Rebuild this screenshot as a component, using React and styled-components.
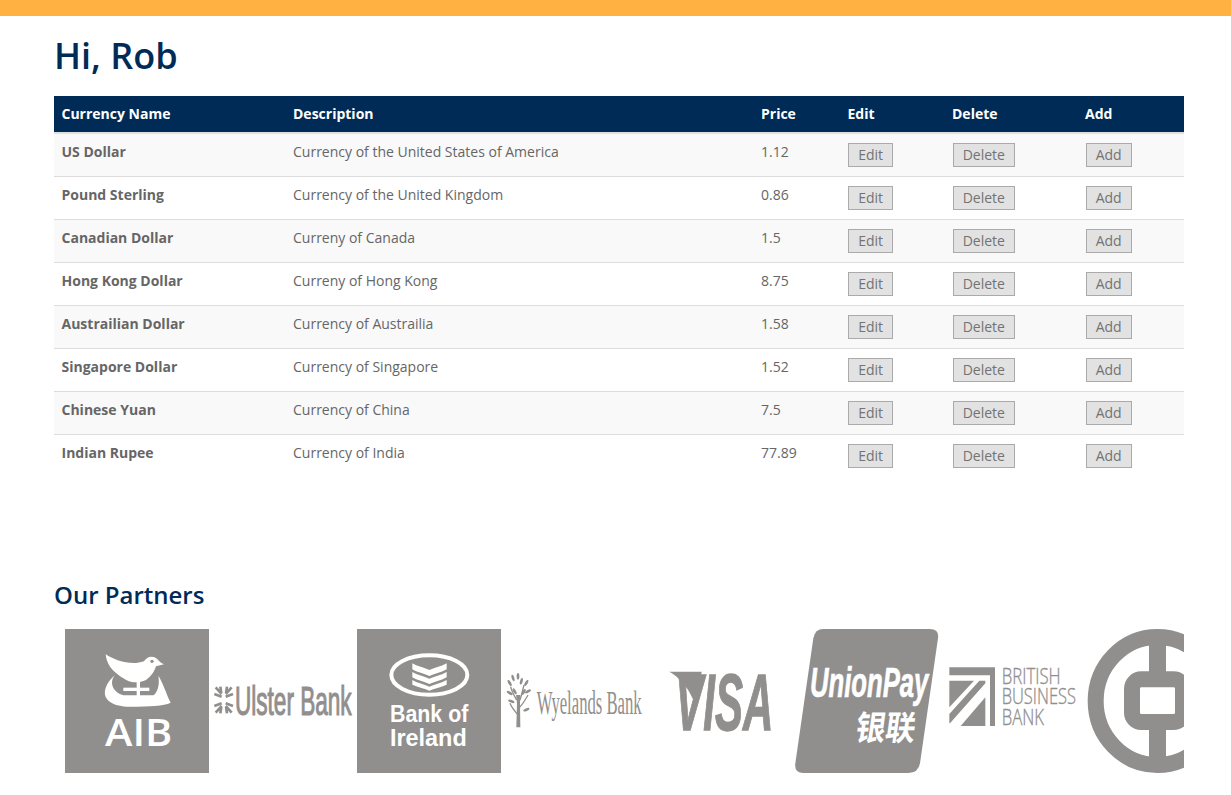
import React from "react";
import styled, { createGlobalStyle } from "styled-components";

const GlobalStyle = createGlobalStyle`
  html, body {
    margin: 0;
    padding: 0;
    background: #fff;
    font-family: "Open Sans", "Liberation Sans", sans-serif;
    overflow: hidden;
  }
`;

const TopBar = styled.div`
  height: 16px;
  background: #ffb142;
`;

const Page = styled.main`
  padding: 0 47px 0 54px;
`;

const Greeting = styled.h1`
  margin: 0;
  padding-top: 16px;
  height: 80px;
  box-sizing: border-box;
  font-size: 36px;
  line-height: 48px;
  font-weight: 600;
  color: #002b57;
`;

const Table = styled.table`
  width: 1130px;
  border-collapse: separate;
  border-spacing: 0;
  table-layout: fixed;
  font-size: 14px;
`;

const HeadCell = styled.th`
  box-sizing: border-box;
  height: 38px;
  padding: 0 0 2px 7.5px;
  background: #002b57;
  border-bottom: 2px solid #e0e0e0;
  background-clip: padding-box;
  color: #fff;
  font-weight: 700;
  text-align: left;
  width: ${(p) => p.$w}px;
`;

const Row = styled.tr`
  background: ${(p) => (p.$odd ? "#f9f9f9" : "#fff")};
`;

const Cell = styled.td`
  height: 43px;
  padding: 8px 0 0 7.5px;
  box-sizing: border-box;
  vertical-align: top;
  line-height: 20px;
  color: #666;
  font-weight: ${(p) => (p.$bold ? 700 : 400)};
  border-bottom: 1px solid #ddd;

  tr:last-child > & {
    border-bottom: none;
  }
`;

const ActionButton = styled.button`
  display: block;
  height: 24px;
  margin: 1px 0 0 0.5px;
  padding: 0 9.2px;
  box-sizing: border-box;
  border: 1px solid #aaa;
  border-radius: 0;
  background: #e2e2e2;
  color: #737373;
  font-family: inherit;
  font-size: 14px;
  line-height: 20px;
`;

const SectionTitle = styled.h2`
  margin: 0;
  padding-top: 99px;
  font-size: 24px;
  line-height: 36px;
  font-weight: 600;
  color: #002b57;
`;

const Carousel = styled.div`
  display: flex;
  gap: 2px;
  margin-top: 16px;
  padding-left: 11px;
  width: 1119px;
  overflow: hidden;
`;

const Logo = styled.svg`
  display: block;
  flex: none;
  width: 144px;
  height: 144px;
`;

const GREY = "#918f8e";

const rows = [
  ["US Dollar", "Currency of the United States of America", "1.12"],
  ["Pound Sterling", "Currency of the United Kingdom", "0.86"],
  ["Canadian Dollar", "Curreny of Canada", "1.5"],
  ["Hong Kong Dollar", "Curreny of Hong Kong", "8.75"],
  ["Austrailian Dollar", "Currency of Austrailia", "1.58"],
  ["Singapore Dollar", "Currency of Singapore", "1.52"],
  ["Chinese Yuan", "Currency of China", "7.5"],
  ["Indian Rupee", "Currency of India", "77.89"],
];

const columns = [
  ["Currency Name", 231.5],
  ["Description", 468],
  ["Price", 86.5],
  ["Edit", 104.5],
  ["Delete", 133],
  ["Add", 106.5],
];

const sans = '"Liberation Sans", Arial, sans-serif';
const serif = '"Liberation Serif", serif';
const open = '"Open Sans", sans-serif';

function AibLogo() {
  return (
    <Logo viewBox="45 27 432 432">
      <rect x="45" y="27" width="432" height="432" fill={GREY} />
      <path fill="#fff" d="M167 103C195 122 245 138 282 124C290 110 305 106 318 114C325 120 330 128 342 133L318 139C312 158 300 172 288 180C272 188 258 188 245 186C225 180 197 162 180 140C172 128 168 115 167 103Z" />
      <circle cx="306" cy="124" r="5" fill={GREY} />
      <rect x="260" y="180" width="10" height="50" fill="#fff" />
      <rect x="220" y="203" width="78" height="10" fill="#fff" />
      <path fill="#fff" d="M195 165C178 185 185 215 220 226L310 226C322 218 330 195 325 167C340 190 350 225 362 248C340 258 300 260 240 260C190 260 160 240 165 212C168 195 180 178 195 165Z" />
      <text x="165" y="377" fontFamily={open} fontWeight="600" fontSize="112" fill="#fff" textLength="202" lengthAdjust="spacingAndGlyphs">AIB</text>
    </Logo>
  );
}

function UlsterLogo() {
  const quad = "M-24-38L-6-18M-10-40L-7-20M-28-18L-6-10";
  return (
    <Logo viewBox="483 27 432 432">
      <g stroke={GREY} strokeWidth="8" fill="none" transform="translate(521 240)">
        <path d={quad} />
        <path d={quad} transform="scale(-1 1)" />
        <path d={quad} transform="scale(1 -1)" />
        <path d={quad} transform="scale(-1 -1)" />
      </g>
      <text x="555" y="285" fontFamily={sans} fontSize="122" fill={GREY} stroke={GREY} strokeWidth="3.5" textLength="350" lengthAdjust="spacingAndGlyphs">Ulster Bank</text>
    </Logo>
  );
}

function BankOfIrelandLogo() {
  return (
    <Logo viewBox="21 27 432 432">
      <rect x="21" y="27" width="432" height="432" fill={GREY} />
      <ellipse cx="238" cy="165" rx="114" ry="59" fill="none" stroke="#fff" strokeWidth="12" />
      <path fill="#fff" d="M187 130C205 140 225 144 238 150C252 144 272 140 290 130V148C272 158 252 162 238 168C225 162 205 158 187 148Z" />
      <path fill="#fff" d="M187 156C205 166 225 170 238 176C252 170 272 166 290 156V172C272 182 252 186 238 192C225 186 205 182 187 172Z" />
      <path fill="#fff" d="M187 180C205 190 225 194 238 200C252 194 272 190 290 180V194C272 202 252 206 238 212C225 206 205 202 187 194Z" />
      <text x="120" y="305" fontFamily={sans} fontWeight="700" fontSize="74" fill="#fff" textLength="235" lengthAdjust="spacingAndGlyphs">Bank of</text>
      <text x="120" y="377" fontFamily={sans} fontWeight="700" fontSize="74" fill="#fff" textLength="230" lengthAdjust="spacingAndGlyphs">Ireland</text>
    </Logo>
  );
}

function WyelandsLogo() {
  const leaves = [
    [479, 189, -30], [489, 174, -15], [504, 169, 0], [514, 184, 15], [529, 189, 30],
    [479, 219, -60], [494, 214, -30], [521, 216, 30], [534, 214, 60], [484, 244, -70], [529, 269, 70],
  ];
  return (
    <Logo viewBox="459 27 432 432">
      <path fill={GREY} d="M499 322L501 250L498 225H511L510 250L511 322Z" />
      <path fill="none" stroke={GREY} strokeWidth="4" d="M504 285C492 270 484 262 480 250M505 265C518 255 525 240 534 225M500 240C492 225 485 215 482 200M510 240C515 225 518 210 522 195" />
      {leaves.map(([x, y, r]) => (
        <ellipse key={`${x}-${y}`} cx={x} cy={y} rx="4" ry="10" fill={GREY} transform={`rotate(${r} ${x} ${y})`} />
      ))}
      <text x="560" y="283" fontFamily={serif} fontSize="98" fill={GREY} textLength="315" lengthAdjust="spacingAndGlyphs">Wyelands Bank</text>
    </Logo>
  );
}

function VisaLogo() {
  return (
    <Logo viewBox="-33 27 432 432">
      <path fill={GREY} d="M28 155H125L120 190L100 240C82 197 55 170 28 155Z" />
      <text x="46" y="329" fontFamily={sans} fontWeight="700" fontStyle="italic" fontSize="240" fill={GREY} stroke={GREY} strokeWidth="4" textLength="294" lengthAdjust="spacingAndGlyphs">VISA</text>
    </Logo>
  );
}

function UnionPayLogo() {
  return (
    <Logo viewBox="405 27 432 432">
      <path fill={GREY} d="M490 27H810Q838 27 834 55L780 430Q775 459 745 459H430Q402 459 406 430L460 55Q465 27 490 27Z" />
      <text x="450" y="232" fontFamily={sans} fontWeight="700" fontStyle="italic" fontSize="125" fill="#fff" stroke="#fff" strokeWidth="2" textLength="355" lengthAdjust="spacingAndGlyphs">UnionPay</text>
      <text x="633" y="360" transform="skewX(-8)" fontFamily={'"Noto Sans CJK SC", sans-serif'} fontWeight="700" fontSize="102" fill="#fff" textLength="180" lengthAdjust="spacingAndGlyphs">银联</text>
    </Logo>
  );
}

function BritishBusinessLogo() {
  const text = { fontFamily: open, fontWeight: 300, fontSize: 64, fill: GREY, stroke: GREY, strokeWidth: 1, lengthAdjust: "spacingAndGlyphs", x: 185 };
  return (
    <Logo viewBox="3 27 432 432">
      <path fill={GREY} d="M28 142H165V318H150V166H28Z" />
      <path fill={GREY} d="M28 182H102L28 262ZM28 282L118 182H136V190L30 310H28ZM62 318L136 232V318Z" />
      <text {...text} y="192" textLength="177">BRITISH</text>
      <text {...text} y="253" textLength="223">BUSINESS</text>
      <text {...text} y="315" textLength="127">BANK</text>
    </Logo>
  );
}

function BankOfChinaLogo() {
  return (
    <Logo viewBox="441 27 432 432">
      <ellipse cx="652" cy="243" rx="185" ry="192" fill="none" stroke={GREY} strokeWidth="48" />
      <rect x="627" y="40" width="51" height="120" fill={GREY} />
      <rect x="627" y="325" width="51" height="120" fill={GREY} />
      <rect x="576" y="178" width="153" height="128" rx="28" fill="none" stroke={GREY} strokeWidth="48" />
    </Logo>
  );
}

export default function App() {
  return (
    <>
      <GlobalStyle />
      <TopBar />
      <Page>
        <Greeting>Hi, Rob</Greeting>
        <Table>
          <thead>
            <tr>
              {columns.map(([label, w]) => (
                <HeadCell key={label} $w={w}>{label}</HeadCell>
              ))}
            </tr>
          </thead>
          <tbody>
            {rows.map(([name, desc, price], i) => (
              <Row key={name} $odd={i % 2 === 0}>
                <Cell $bold>{name}</Cell>
                <Cell>{desc}</Cell>
                <Cell>{price}</Cell>
                <Cell><ActionButton>Edit</ActionButton></Cell>
                <Cell><ActionButton>Delete</ActionButton></Cell>
                <Cell><ActionButton>Add</ActionButton></Cell>
              </Row>
            ))}
          </tbody>
        </Table>
        <SectionTitle>Our Partners</SectionTitle>
        <Carousel>
          <AibLogo />
          <UlsterLogo />
          <BankOfIrelandLogo />
          <WyelandsLogo />
          <VisaLogo />
          <UnionPayLogo />
          <BritishBusinessLogo />
          <BankOfChinaLogo />
        </Carousel>
      </Page>
    </>
  );
}
